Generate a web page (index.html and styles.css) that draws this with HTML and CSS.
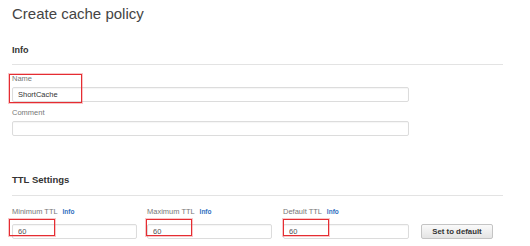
FILE: index.html
```html
<!DOCTYPE html>
<html>
  <head>
    <title>Create cache policy</title>
    <meta name="viewport" content="width=device-width, initial-scale=1.0" />
    <link rel="stylesheet" href="styles.css">
  </head>
  <body>
    <div class="page">
      <h1 class="page-title">Create cache policy</h1>

      <section class="panel panel-info">
        <h2 class="panel-title">Info</h2>

        <div class="field field-name">
          <label for="name">Name</label>
          <input type="text" id="name" value="ShortCache" />
          <span class="mark mark-name"></span>
        </div>

        <div class="field field-comment">
          <label for="comment">Comment</label>
          <input type="text" id="comment" />
        </div>
      </section>

      <section class="panel panel-ttl">
        <h2 class="panel-title">TTL Settings</h2>

        <div class="ttl-row">
          <div class="field ttl-min">
            <label for="minTtl">Minimum TTL <a href="#" class="info-link">Info</a></label>
            <div class="input-wrap">
              <input type="text" id="minTtl" value="60" />
              <span class="mark mark-min"></span>
            </div>
          </div>

          <div class="field ttl-max">
            <label for="maxTtl">Maximum TTL <a href="#" class="info-link">Info</a></label>
            <div class="input-wrap">
              <input type="text" id="maxTtl" value="60" />
              <span class="mark mark-max"></span>
            </div>
          </div>

          <div class="field ttl-default">
            <label for="defaultTtl">Default TTL <a href="#" class="info-link">Info</a></label>
            <div class="input-wrap">
              <input type="text" id="defaultTtl" value="60" />
              <span class="mark mark-default"></span>
            </div>
          </div>

          <button class="btn-default">Set to default</button>
        </div>
      </section>
    </div>
  </body>
</html>
```

FILE: styles.css
```css
* {
  box-sizing: border-box;
}

body {
  margin: 0;
  background: #ffffff;
  font-family: "Liberation Sans", Arial, sans-serif;
  color: #333333;
}

.page {
  width: 503px;
  padding: 5px 0 0 12px;
}

.page-title {
  margin: 0;
  font-size: 15px;
  line-height: 18px;
  font-weight: normal;
  color: #444444;
}

.panel-title {
  margin: 0;
  padding-bottom: 8px;
  font-size: 9px;
  line-height: 12px;
  font-weight: bold;
  color: #333333;
  border-bottom: 1px solid #e3e3e3;
}

.panel-info {
  margin-top: 21px;
}

.panel-ttl {
  margin-top: 38px;
}

.panel-ttl .panel-title {
  font-size: 9.5px;
  padding-bottom: 9px;
}

.field {
  position: relative;
  display: flex;
  flex-direction: column;
  gap: 4px;
}

.field label {
  font-size: 7.5px;
  line-height: 9px;
  color: #777777;
}

.field input {
  width: 397px;
  height: 15px;
  padding: 0 5px;
  border: 1px solid #dcdcdc;
  border-radius: 2px;
  box-shadow: inset 0 1px 1px rgba(0, 0, 0, 0.04);
  font-family: inherit;
  font-size: 7.5px;
  color: #333333;
  outline: none;
}

.ttl-row .field input {
  width: 125px;
  color: #555555;
}

.field-name {
  margin-top: 9px;
}

.field-comment {
  margin-top: 6px;
}

.ttl-row {
  display: flex;
  align-items: flex-end;
  margin-top: 11px;
}

.ttl-max {
  margin-left: 10px;
}

.ttl-default {
  margin-left: 11px;
}

.ttl-row .ttl-default input {
  width: 126px;
}

.info-link {
  margin-left: 3px;
  font-size: 6.5px;
  font-weight: bold;
  color: #2f6fc0;
  text-decoration: none;
}

.input-wrap {
  position: relative;
}

.btn-default {
  margin-left: 12px;
  width: 72px;
  height: 15px;
  padding: 0;
  border: 1px solid #c4c4c4;
  border-radius: 2px;
  background: linear-gradient(#fafafa, #e4e4e4);
  font-family: inherit;
  font-size: 7.8px;
  font-weight: bold;
  color: #333333;
}

/* red annotation boxes drawn over the screenshot */
.mark {
  position: absolute;
  border: 1px solid #e52d32;
  box-shadow: 0 0 0 1px rgba(238, 90, 94, 0.35);
  pointer-events: none;
}

.mark-name {
  left: -3px;
  top: 0;
  width: 73px;
  height: 29px;
}

.mark-min,
.mark-max,
.mark-default {
  top: -1px;
  width: 46px;
  height: 17px;
}

.mark-min {
  left: -3px;
}

.mark-max {
  left: -1px;
}

.mark-default {
  left: 0;
}
```
